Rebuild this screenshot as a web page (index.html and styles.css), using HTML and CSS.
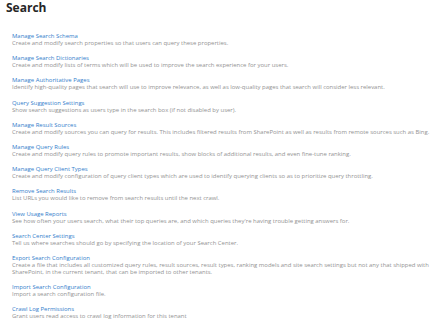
FILE: index.html
```html
<!DOCTYPE html>
<html lang="en">
<head>
<meta charset="UTF-8">
<meta name="viewport" content="width=device-width, initial-scale=1.0">
<title>Search</title>
<link rel="stylesheet" href="styles.css">
</head>
<body>

<h1 class="page-title">Search</h1>

<ul class="settings">
    <li>
        <a href="#">Manage Search Schema</a>
        <p>Create and modify search properties so that users can query these properties.</p>
    </li>
    <li>
        <a href="#">Manage Search Dictionaries</a>
        <p>Create and modify lists of terms which will be used to improve the search experience for your users.</p>
    </li>
    <li>
        <a href="#">Manage Authoritative Pages</a>
        <p>Identify high-quality pages that search will use to improve relevance, as well as low-quality pages that search will consider less relevant.</p>
    </li>
    <li>
        <a href="#">Query Suggestion Settings</a>
        <p>Show search suggestions as users type in the search box (if not disabled by user).</p>
    </li>
    <li>
        <a href="#">Manage Result Sources</a>
        <p>Create and modify sources you can query for results. This includes filtered results from SharePoint as well as results from remote sources such as Bing.</p>
    </li>
    <li>
        <a href="#">Manage Query Rules</a>
        <p>Create and modify query rules to promote important results, show blocks of additional results, and even fine-tune ranking.</p>
    </li>
    <li>
        <a href="#">Manage Query Client Types</a>
        <p>Create and modify configuration of query client types which are used to identify querying clients so as to prioritize query throttling.</p>
    </li>
    <li>
        <a href="#">Remove Search Results</a>
        <p>List URLs you would like to remove from search results until the next crawl.</p>
    </li>
    <li>
        <a href="#">View Usage Reports</a>
        <p>See how often your users search, what their top queries are, and which queries they're having trouble getting answers for.</p>
    </li>
    <li>
        <a href="#">Search Center Settings</a>
        <p>Tell us where searches should go by specifying the location of your Search Center.</p>
    </li>
    <li>
        <a href="#">Export Search Configuration</a>
        <p>Create a file that includes all customized query rules, result sources, result types, ranking models and site search settings but not any that shipped with SharePoint, in the current tenant, that can be imported to other tenants.</p>
    </li>
    <li>
        <a href="#">Import Search Configuration</a>
        <p>Import a search configuration file.</p>
    </li>
    <li>
        <a href="#">Crawl Log Permissions</a>
        <p>Grant users read access to crawl log information for this tenant</p>
    </li>
</ul>

</body>
</html>
```

FILE: styles.css
```css
body, html {
    margin: 0;
    padding: 0;
    background: #fff;
    font-family: "Open Sans", "Noto Sans", Arial, sans-serif;
}
.page-title {
    margin: 0;
    padding: 0 0 0 6px;
    font-size: 12px;
    line-height: 16px;
    font-weight: bold;
    color: #262626;
}
.settings {
    list-style: none;
    margin: 0;
    padding: 17px 0 0 12px;
    width: 418px;
}
.settings li {
    margin-bottom: 8.2px;
    font-size: 5.95px;
    line-height: 7px;
}
.settings a {
    color: #3480cc;
    text-decoration: none;
    display: block;
}
.settings p {
    margin: 0;
    color: #939393;
}
```
